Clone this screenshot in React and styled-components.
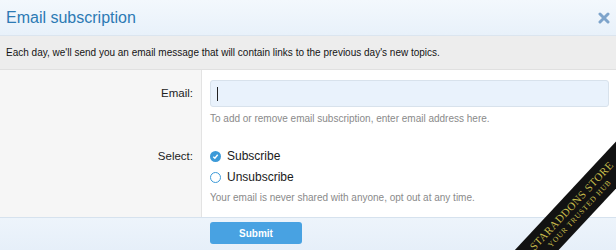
import { createGlobalStyle, styled } from "styled-components";

const Global = createGlobalStyle`
  html, body {
    margin: 0;
    padding: 0;
    background: #ffffff;
  }
  body {
    font-family: "Liberation Sans", Arial, sans-serif;
    color: #141414;
  }
`;

const Overlay = styled.div`
  position: relative;
  width: 616px;
  height: 250px;
  overflow: hidden;
  background: #fff;
`;

const Header = styled.div`
  display: flex;
  align-items: center;
  justify-content: space-between;
  height: 35px;
  padding: 0 6px;
  background: linear-gradient(to bottom, #f3f8fd, #e8f1fa);
  border-bottom: 1px solid #dbe5ef;
`;

const Title = styled.h2`
  margin: 0;
  font-size: 16px;
  font-weight: normal;
  color: #2c7ab4;
`;

const Close = styled.span`
  display: flex;
  width: 12px;
  height: 12px;
`;

const Intro = styled.div`
  height: 33px;
  display: flex;
  align-items: center;
  padding: 0 6px;
  font-size: 10px;
  background: #ededed;
  border-bottom: 1px solid #e0e0e0;
`;

const Form = styled.div`
  display: grid;
  grid-template-columns: 202px 1fr;
`;

const Label = styled.div`
  background: #f6f6f6;
  border-right: 1px solid #e3e3e3;
  text-align: right;
  padding: ${(p) => p.$pad};
  padding-right: 8px;
  font-size: 11.5px;
  color: #222;
`;

const Field = styled.div`
  padding: ${(p) => p.$pad};
  padding-left: 8px;
  padding-right: 7px;
`;

const Input = styled.div`
  height: 25px;
  border: 1px solid #d8e2ec;
  border-radius: 3px;
  background: #e9f2fc;
  display: flex;
  align-items: center;
  padding-left: 6px;
`;

const Caret = styled.span`
  width: 1px;
  height: 14px;
  background: #222;
`;

const Hint = styled.div`
  font-size: 10px;
  color: #8a8a8a;
  margin-top: ${(p) => p.$top || 6}px;
`;

const Options = styled.div`
  display: flex;
  flex-direction: column;
  gap: 7px;
`;

const Option = styled.label`
  display: flex;
  align-items: center;
  gap: 6px;
  font-size: 12px;
  color: #1a1a1a;
`;

const Radio = styled.span`
  width: 11px;
  height: 11px;
  border-radius: 50%;
  box-sizing: border-box;
  display: flex;
  align-items: center;
  justify-content: center;
  background: ${(p) => (p.$checked ? "#3c9ad8" : "#fff")};
  border: ${(p) => (p.$checked ? "none" : "1.5px solid #3c9ad8")};
`;

const Footer = styled.div`
  display: grid;
  grid-template-columns: 202px 1fr;
  height: 32px;
  background: linear-gradient(to bottom, #edf4fb, #e6eff9);
  border-top: 1px solid #d6e2ee;
`;

const Submit = styled.button`
  margin: 4px 0 0 8px;
  width: 92px;
  height: 22px;
  border: none;
  border-radius: 3px;
  background: #48a2e2;
  color: #fff;
  font-family: "Liberation Sans", Arial, sans-serif;
  font-weight: bold;
  font-size: 10px;
`;

const Ribbon = styled.div`
  position: absolute;
  left: 455px;
  top: 193px;
  width: 240px;
  height: 32px;
  background: #121212;
  transform: rotate(-47deg);
  display: flex;
  flex-direction: column;
  align-items: center;
  justify-content: center;
  font-family: "Liberation Serif", serif;
  color: #c8bd4a;
  line-height: 1;
`;

const RibbonMain = styled.span`
  font-size: 11px;
  letter-spacing: 0.4px;
`;

const RibbonSub = styled.span`
  font-size: 7.5px;
  letter-spacing: 0.9px;
  margin-top: 2px;
`;

export default function App() {
  return (
    <>
      <Global />
      <Overlay>
        <Header>
          <Title>Email subscription</Title>
          <Close>
            <svg width="12" height="12" viewBox="0 0 12 12">
              <path d="M2 2 L10 10 M10 2 L2 10" stroke="#7ea4cb" strokeWidth="3" strokeLinecap="round" />
            </svg>
          </Close>
        </Header>
        <Intro>Each day, we'll send you an email message that will contain links to the previous day's new topics.</Intro>
        <Form>
          <Label $pad="17px 8px 0 0">Email:</Label>
          <Field $pad="10px 0 0 0">
            <Input>
              <Caret />
            </Input>
            <Hint>To add or remove email subscription, enter email address here.</Hint>
          </Field>
          <Label $pad="26px 8px 0 0">Select:</Label>
          <Field $pad="25px 0 14px 0">
            <Options>
              <Option>
                <Radio $checked>
                  <svg width="7" height="7" viewBox="0 0 8 8">
                    <path d="M1.5 4.2 L3.3 6 L6.5 2" stroke="#fff" strokeWidth="1.6" fill="none" />
                  </svg>
                </Radio>
                Subscribe
              </Option>
              <Option>
                <Radio />
                Unsubscribe
              </Option>
            </Options>
            <Hint $top={8}>Your email is never shared with anyone, opt out at any time.</Hint>
          </Field>
        </Form>
        <Footer>
          <div />
          <div>
            <Submit>Submit</Submit>
          </div>
        </Footer>
        <Ribbon>
          <RibbonMain>STARADDONS STORE</RibbonMain>
          <RibbonSub>YOUR TRUSTED HUB</RibbonSub>
        </Ribbon>
      </Overlay>
    </>
  );
}
